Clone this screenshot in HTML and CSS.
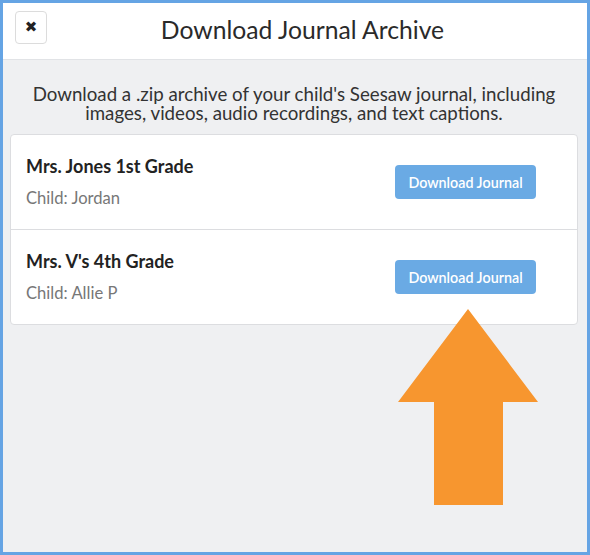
FILE: index.html
```html
<!DOCTYPE html>
<html>
<head>
<meta charset="utf-8">
<link rel="stylesheet" href="styles.css">
</head>
<body>
<div class="frame">
  <header class="modal-header">
    <button class="close-btn" aria-label="Close">&#x2716;</button>
    <h1 class="title">Download Journal Archive</h1>
  </header>
  <main class="modal-body">
    <p class="intro">Download a .zip archive of your child's Seesaw journal, including images, videos, audio recordings, and text captions.</p>
    <div class="card">
      <div class="row">
        <div class="info">
          <div class="class-name">Mrs. Jones 1st Grade</div>
          <div class="child">Child: Jordan</div>
        </div>
        <button class="dl-btn">Download Journal</button>
      </div>
      <div class="row">
        <div class="info">
          <div class="class-name">Mrs. V's 4th Grade</div>
          <div class="child">Child: Allie P</div>
        </div>
        <button class="dl-btn">Download Journal</button>
      </div>
    </div>
    <svg class="arrow" width="140" height="197" viewBox="0 0 140 197">
      <polygon points="70,0 140,93 105,93 105,196 36,196 36,93 0,93" fill="#f7962f"/>
    </svg>
  </main>
</div>
</body>
</html>
```

FILE: styles.css
```css
* { box-sizing: border-box; }
html, body { margin: 0; padding: 0; }
body {
  font-family: "Lato", "Open Sans", sans-serif;
  color: #333;
}
.frame {
  width: 590px;
  height: 555px;
  border: 3px solid #65a4e4;
  background: #eff0f2;
  display: flex;
  flex-direction: column;
  position: relative;
}
.modal-header {
  height: 57px;
  background: #fff;
  border-bottom: 1px solid #e1e3e6;
  display: flex;
  align-items: center;
  position: relative;
  padding-left: 12px;
}
.close-btn {
  width: 32px;
  height: 33px;
  border: 1px solid #dcdcdc;
  border-radius: 4px;
  background: #fff;
  color: #222;
  font-size: 15px;
  line-height: 1;
  padding: 0;
  margin-top: -7px;
  font-family: "DejaVu Sans", sans-serif;
  font-weight: bold;
}
.title {
  flex: 1;
  margin: 0;
  text-align: center;
  font-size: 24.7px;
  font-weight: 400;
  color: #2a2a2a;
  padding-right: 29px;
  margin-top: -3px;
}
.modal-body {
  flex: 1;
  position: relative;
  padding: 25px 9px 0 7px;
}
.intro {
  margin: 0 0 11px;
  text-align: center;
  font-size: 18.7px;
  line-height: 19px;
  padding: 0 4px;
  color: #333;
}
.card {
  background: #fff;
  border: 1px solid #dcdde0;
  border-radius: 4px;
}
.row {
  height: 94px;
  display: flex;
  align-items: center;
  justify-content: space-between;
  padding: 0 41px 0 15px;
}
.row + .row { border-top: 1px solid #dcdde0; height: 95px; }
.class-name {
  font-weight: 700;
  font-size: 18px;
  color: #222;
  line-height: 20px;
}
.child {
  font-size: 16.6px;
  color: #777;
  line-height: 20px;
  margin-top: 12px;
}
.dl-btn {
  width: 141px;
  height: 34px;
  border: none;
  border-radius: 4px;
  background: #6aaae4;
  color: #fff;
  font-family: inherit;
  font-size: 14.3px;
  font-weight: 600;
  padding: 0;
}
.arrow {
  position: absolute;
  left: 395px;
  top: 249px;
}
```
